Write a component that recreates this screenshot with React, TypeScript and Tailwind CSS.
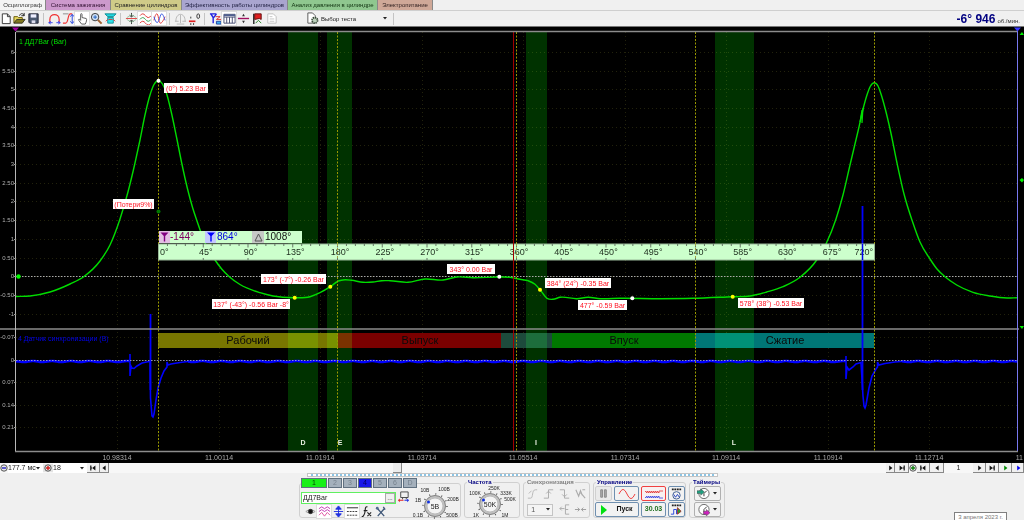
import type { ReactNode } from "react";

type Point = [number, number];

const tabs = [
  { label: "Осциллограф", className: "w-[46px] bg-[#f4f4f4] text-[#333]" },
  { label: "Система зажигания", className: "w-[65px] bg-[#cc99cc] text-[#301030]" },
  { label: "Сравнение цилиндров", className: "w-[71px] bg-[#cfcb88] text-[#222]" },
  { label: "Эффективность работы цилиндров", className: "w-[106px] bg-[#a9a5cf] text-[#222244]" },
  { label: "Анализ давления в цилиндре", className: "w-[90px] bg-[#8fc78f] text-[#113311]" },
  { label: "Электропитание", className: "w-[55px] bg-[#cfa898] text-[#332222]" },
];

const pressure: Point[] = [
  [16, 296.5], [30, 296], [50, 292], [70, 284], [84, 276.5], [100, 261], [110, 245], [120, 219],
  [127.7, 193], [135, 163], [140, 140], [145, 115], [150, 95], [154, 84.5], [158.5, 80.7],
  [162.5, 84], [166.7, 94], [171.7, 114], [176.7, 138], [181.7, 163], [187.3, 188], [192.7, 208],
  [197, 221], [205, 243], [215, 260], [221.7, 269], [229.3, 276.7], [240, 284.5], [260, 292.7],
  [273, 296], [294.7, 297.7], [310, 296.7], [320, 292.7], [330.3, 286.7], [338.3, 281],
  [345, 279.7], [351.7, 280.3], [363, 282.3], [373, 282], [381.7, 280.7], [390, 280.7],
  [408, 282.3], [425, 279], [443, 280], [457, 277], [473, 277.7], [499, 277], [510, 277.3],
  [520, 279.3], [528, 280.7], [535, 284.3], [540, 289.7], [547, 298.3], [553, 299.3],
  [560, 297.3], [577, 298.7], [588, 297.3], [600, 298.7], [620, 298.3], [660, 298.7],
  [693, 298.3], [732.7, 296.7], [750, 296], [766.7, 292], [783, 286.7], [800, 277.3],
  [816.7, 260], [826, 244], [836, 219], [843, 195], [850, 165], [858.3, 130], [863.3, 108],
  [867.3, 94], [870.5, 86], [874.3, 82.7], [878, 86], [881, 94], [885, 108], [890.7, 132],
  [897, 163], [904, 194], [912.3, 221], [920, 242], [930, 259], [937, 269], [945, 276.7],
  [956.7, 285], [973, 292.3], [990, 296], [1007, 298], [1017, 297.7],
];

// Cubic Hermite spline, slopes weighted by the spacing of the samples
function smooth(points: Point[]) {
  const last = points.length - 1;
  const secant = (i: number) => (points[i + 1][1] - points[i][1]) / (points[i + 1][0] - points[i][0]);
  const slope = (i: number) => {
    if (i === 0) return secant(0);
    if (i === last) return secant(last - 1);
    const h0 = points[i][0] - points[i - 1][0];
    const h1 = points[i + 1][0] - points[i][0];
    return (secant(i - 1) * h1 + secant(i) * h0) / (h0 + h1);
  };
  let d = `M${points[0][0]} ${points[0][1]}`;
  for (let i = 0; i < last; i++) {
    const [x0, y0] = points[i];
    const [x1, y1] = points[i + 1];
    const h = (x1 - x0) / 3;
    d += `C${x0 + h} ${y0 + slope(i) * h} ${x1 - h} ${y1 - slope(i + 1) * h} ${x1} ${y1}`;
  }
  return d;
}

function noise(from: number, to: number) {
  let d = `M${from} 361.5`;
  for (let x = from + 1; x <= to; x++) {
    d += `L${x} ${361.5 + Math.sin(x * 12.9) * 0.5}`;
  }
  return d;
}

const leftAxis: [string, number][] = [
  ["6", 52], ["5.50", 71], ["5", 89], ["4.50", 108], ["4", 127], ["3.50", 145], ["3", 164],
  ["2.50", 183], ["2", 201], ["1.50", 220], ["1", 239], ["0.50", 258], ["0", 276],
  ["-0.50", 295], ["-1", 314], ["-0.07", 337], ["0", 360], ["0.07", 382], ["0.14", 405], ["0.21", 427],
];

const timeAxis: [string, number][] = [
  ["10.98314", 117], ["11.00114", 219], ["11.01914", 320], ["11.03714", 422], ["11.05514", 523],
  ["11.07314", 625], ["11.09114", 726], ["11.10914", 828], ["11.12714", 929],
];

const bands = [
  { x: 288, width: 30, name: "D", tx: 303 },
  { x: 327, width: 25, name: "E", tx: 340 },
  { x: 526, width: 21, name: "I", tx: 536 },
  { x: 715, width: 39, name: "L", tx: 734 },
];

const phases = [
  { x: 158, width: 180, fill: "#787600", name: "Рабочий", tx: 248 },
  { x: 338, width: 163, fill: "#7a0000", name: "Выпуск", tx: 420 },
  { x: 501, width: 51, fill: "#1d4a3c", name: "", tx: 527 },
  { x: 552, width: 143, fill: "#007800", name: "Впуск", tx: 624 },
  { x: 695, width: 179, fill: "#007676", name: "Сжатие", tx: 785 },
];

const tags = [
  { x: 164, y: 83, width: 44, text: "(0°) 5.23 Bar" },
  { x: 113, y: 199, width: 41, text: "(Потери9%)" },
  { x: 261, y: 274, width: 65, text: "173° (-7°) -0.26 Bar" },
  { x: 212, y: 299, width: 78, text: "137° (-43°) -0.56 Bar -8°" },
  { x: 447, y: 264, width: 48, text: "343° 0.00 Bar" },
  { x: 545, y: 278, width: 66, text: "384° (24°) -0.35 Bar" },
  { x: 578, y: 300, width: 49, text: "477° -0.59 Bar" },
  { x: 738, y: 298, width: 66, text: "578° (38°) -0.53 Bar" },
];

const dots: [number, number, string][] = [
  [158.5, 80.7, "#fff"], [158.5, 211.5, "#007800"], [294.7, 297.7, "#ff0"], [330.3, 286.7, "#ff0"],
  [499.3, 276.7, "#fff"], [540, 289.7, "#ff0"], [632.3, 298.3, "#fff"], [732.7, 296.7, "#ff0"],
];

const cycleMarks = [158.5, 337.5, 516.5, 695.5, 874.5];
const degrees = Array.from({ length: 15 }, (_, i) => (i + 1) * 45);

const Chart = () => (
  <svg viewBox="0 26 1024 437" className="block w-full bg-black" fontFamily="Liberation Sans, Arial, sans-serif">
    {/* Grid */}
    <g stroke="#22220c" strokeDasharray="1 3">
      {leftAxis.map(([, y]) => (
        <line key={y} x1="16" x2="1017" y1={y + 0.5} y2={y + 0.5} />
      ))}
      {timeAxis.map(([t, x]) => (
        <line key={t} x1={x + 0.5} x2={x + 0.5} y1="32" y2="451" />
      ))}
    </g>

    {/* Stroke bars */}
    {phases.map((p) => (
      <rect key={p.x} x={p.x} y="333" width={p.width} height="15" fill={p.fill} />
    ))}
    {bands.map((b) => (
      <rect key={b.name} x={b.x} y="32" width={b.width} height="419" fill="#003200" className="mix-blend-screen" />
    ))}
    <g fontSize="11" textAnchor="middle" fill="#0a0a0a">
      {phases.map((p) => p.name && <text key={p.x} x={p.tx} y="344">{p.name}</text>)}
    </g>

    {/* Zero line */}
    <path d="M16 276.500H1017" stroke="#aaa" strokeDasharray="1.5 1.5" />

    <path d={smooth(pressure)} fill="none" stroke="#00dc00" strokeWidth="1.4" />
    <path d="M860 122L862 110V123L863 108" fill="none" stroke="#00e000" strokeWidth="1.2" />

    {/* Sync sensor */}
    <g fill="none" stroke="#0000ff">
      <path d={noise(16, 129)} strokeWidth="2.6" />
      <path d={noise(188, 845)} strokeWidth="2.6" />
      <path d={noise(902, 1017)} strokeWidth="2.6" />
      <path
        d="M129 361L130 362V354V376L131 366L132 368L134 368.500L137 366L142 363L149 361.500L150 362L150.500 398L151.500 410L152 416L153 417L154 414L156 400L158 388L161 378L164 371L167 367V362L168 365L171 364L180 362.500L188 361.500"
        strokeWidth="1.6"
      />
      <path d="M150.500 314V390" strokeWidth="1.800" />
      <path
        d="M845 361L846 362V356V379L847 367L849 370L853 367L856 364L861 362.500L863 396L864 406L865 408L866 405L869 388L872 376L876 369L877.500 367V362L879 365L885 363.500L895 362L902 361.500"
        strokeWidth="1.6"
      />
      <path d="M862.500 206V390" strokeWidth="1.800" />
    </g>
    <path d="M16 360.500H1017" stroke="#b0b0d0" strokeOpacity="0.8" strokeDasharray="1.5 1.5" />

    {/* Cycle marks */}
    {cycleMarks.map((x) => (
      <line key={x} x1={x} x2={x} y1="32" y2="451" stroke="#989800" strokeDasharray="2 1.5" />
    ))}

    {/* Degree ruler */}
    <rect x="158.500" y="244" width="716" height="16" fill="#ccffcc" stroke="#99b899" />
    <g stroke="#667766">
      {Array.from({ length: 79 }, (_, i) => {
        const x = 158.5 + (i + 1) * 8.95;
        const major = (i + 1) % 5 === 0;
        return (
          <g key={i}>
            <line x1={x} x2={x} y1="244" y2={major ? 247.5 : 246} />
            {major && <line x1={x} x2={x} y1="258" y2="260" />}
          </g>
        );
      })}
    </g>
    <g fontSize="9" fill="#223322">
      <text x="160" y="255">0°</text>
      {degrees.map((d) => (
        <text key={d} x={161 + d * 0.9943} y="255" textAnchor="middle">{d}°</text>
      ))}
      <text x="873" y="255" textAnchor="end">720°</text>
    </g>
    <line x1="862.500" x2="862.500" y1="244" y2="260" stroke="#0000f0" strokeWidth="1.5" />
    {cycleMarks.slice(1, 4).map((x) => (
      <line key={x} x1={x} x2={x} y1="244" y2="260" stroke="#a0a040" strokeDasharray="2 2" />
    ))}
    <line x1="513.500" x2="513.500" y1="32" y2="451" stroke="#a00000" />

    {/* Cursor read-out */}
    <rect x="159" y="231" width="143" height="12" fill="#ccffcc" />
    <rect x="159" y="231" width="11" height="12" fill="#e2bfe2" />
    <rect x="205" y="231" width="11" height="12" fill="#c4c8ff" />
    <rect x="252" y="231" width="12" height="12" fill="#c6c8c6" />
    <path d="M160.500 232.500H168.500L165.200 236V241.500H163.800V236Z" fill="#800080" />
    <path d="M207 232.500H215L211.700 236V241.500H210.300V236Z" fill="#0000ff" />
    <path d="M258.500 234L262 241H255Z" fill="none" stroke="#555" />
    <g fontSize="10">
      <text x="170" y="240" fill="#800060">-144°</text>
      <text x="217" y="240" fill="#0000e0">864°</text>
      <text x="265" y="240" fill="#111">1008°</text>
    </g>

    {dots.map(([x, y, fill]) => (
      <circle key={`${x}-${y}`} cx={x} cy={y} r="2" fill={fill} />
    ))}
    <circle cx="18.500" cy="276.500" r="2.200" fill="#00ff00" />

    {/* Value tags */}
    {tags.map((t) => (
      <g key={t.text}>
        <rect x={t.x} y={t.y} width={t.width} height="10" fill="#fff" />
        <text x={t.x + t.width / 2} y={t.y + 8} fontSize="7" textAnchor="middle" fill="#ff1020">{t.text}</text>
      </g>
    ))}

    {/* Frame */}
    <path d="M0 26.500H1024" stroke="#777" />
    <path d="M16 31.500H1018M0 329H1019M15 451.500H1018" stroke="#8c8c8c" strokeWidth="1.300" />
    <path d="M15.500 32V451" stroke="#b8b8b8" />
    <path d="M1017.500 28V451" stroke="#7878f0" />
    <path d="M12 27.500H19L15.500 31.500Z" fill="#a000a0" />
    <path d="M1014 27.500H1021L1017.500 31.500Z" fill="#3838ff" />
    <path d="M1019.500 35L1022 32L1024 35ZM1019.500 326H1024L1022 329ZM1019.500 180L1022 178L1024 180L1022 182.500Z" fill="#00f000" />

    <g fontSize="6" fill="#b0b0b0" textAnchor="end">
      {leftAxis.map(([label, y]) => (
        <g key={y}>
          <text x="14" y={y + 2}>{label}</text>
          <line x1="14" x2="16" y1={y + 0.5} y2={y + 0.5} stroke="#999" />
        </g>
      ))}
    </g>
    <g fontSize="7" fill="#aaa" textAnchor="middle">
      {timeAxis.map(([label, x]) => (
        <text key={label} x={x} y="460">{label}</text>
      ))}
      <text x="1023" y="460" textAnchor="end">11</text>
    </g>
    <g fontSize="7">
      <text x="19" y="44" fill="#00e000">1 ДД7Bar (Bar)</text>
      <text x="18" y="341" fill="#0000e8">4 Датчик синхронизации (В)</text>
    </g>
    <g fontSize="7" fontWeight="bold" fill="#e8f0e0" textAnchor="middle">
      {bands.map((b) => (
        <text key={b.name} x={b.tx} y="445">{b.name}</text>
      ))}
    </g>
  </svg>
);

const Icon = ({ children }: { children: ReactNode }) => (
  <svg viewBox="0 0 14 14" className="h-[13px] w-[13px] shrink-0" fill="none" stroke="#333">
    {children}
  </svg>
);

const Tool = ({ label, pressed, children }: { label: string; pressed?: boolean; children: ReactNode }) => (
  <button
    aria-label={label}
    className={
      pressed
        ? "flex h-[13px] w-[14px] items-center justify-center bg-white outline outline-[#ddd]"
        : "flex h-[13px] w-[14px] items-center justify-center"
    }
  >
    <Icon>{children}</Icon>
  </button>
);

const Separator = () => <div className="mx-[3px] h-[12px] w-px bg-[#c4c4c4]" />;

const Caret = () => (
  <svg viewBox="0 0 4 3" className="pointer-events-none absolute right-[3px] h-[3px] w-[4px]">
    <path d="M0 0H4L2 2.500Z" fill="#222" />
  </svg>
);

const Toolbar = () => (
  <div className="flex h-[15px] items-center bg-[#f0f0f0]">
    <button aria-label="Новый" className="flex w-[12px] justify-center">
      <Icon><path d="M2.500 2H8L11 5V12.500H2.500ZM8 2V5H11" fill="#fff" /></Icon>
    </button>
    <Tool label="Открыть">
      <path d="M1 12V5H5L6 6H10V8" fill="#e8d860" stroke="#665500" />
      <path d="M1 12L4 8H13L10 12Z" fill="#807820" stroke="#332" />
      <path d="M7 4C8 1 11 1 12 4M12 1V4H9" stroke="#222" />
    </Tool>
    <Tool label="Сохранить">
      <path d="M2 2H12V12H3L2 11Z" fill="#4a5870" stroke="#223" />
      <path d="M4 2.500H10V6H4Z" fill="#eef" stroke="none" />
      <path d="M5 9H9V12H5Z" fill="#dde" stroke="none" />
    </Tool>
    <Separator />
    <Tool label="Цикл">
      <path d="M2 11V8C2 1 12 1 12 8V11" stroke="#f03030" strokeWidth="1.300" />
      <path d="M0.500 11.500H5M9 11.500H13.500M3 10L1 11.500L3 13M11 10L13 11.500L11 13" stroke="#3040f0" />
    </Tool>
    <Tool label="Фронт">
      <path d="M1 12H4C7 12 6 2 9 2H11" stroke="#f03030" strokeWidth="1.300" />
      <path d="M11 3V12M9 5L11 2.500L13 5M9 10L11 12.500L13 10" stroke="#2040e0" />
      <path d="M1 2H7" stroke="#888" />
    </Tool>
    <Tool label="Рука" pressed>
      <path d="M5 9V2.500C5 1.500 6.500 1.500 6.500 2.500V6L11 7C12 8 11 11 10 13H6L3 9C2 8 3.500 7 5 9Z" fill="#fff" stroke="#555" />
    </Tool>
    <Tool label="Масштаб">
      <circle cx="5.500" cy="5.500" r="4" fill="#cfe0f4" stroke="#333" />
      <path d="M3.500 5.500H7.500M5.500 3.500V7.500" stroke="#2060c0" />
      <path d="M8.500 8.500L12.500 12.500" stroke="#a06030" strokeWidth="2.200" />
    </Tool>
    <Tool label="Экран">
      <path d="M1 2H13L10 5H4Z" fill="#20d8e0" stroke="#108890" />
      <path d="M4 6H10V12H4Z" fill="#30e0e8" stroke="#109098" />
      <path d="M5 8H9M2 10L4 8M12 10L10 8" stroke="#e03030" />
    </Tool>
    <Separator />
    <Tool label="Центр">
      <path d="M1 7H13" stroke="#e04040" />
      <path d="M7 1V5M7 9V13M5 3.500L7 5.500L9 3.500M5 10.500L7 8.500L9 10.500" stroke="#333" />
      <path d="M2 6L7 3L12 6M2 8L7 11L12 8" stroke="#70b080" strokeWidth="0.700" />
    </Tool>
    <Tool label="Раздельно" pressed>
      <path d="M1 4Q4 0 7 4T13 4" stroke="#e03030" />
      <path d="M1 8Q4 4 7 8T13 8" stroke="#30a050" />
      <path d="M1 12Q4 8 7 12T13 12" stroke="#e03030" />
    </Tool>
    <Tool label="Вместе" pressed>
      <path d="M1 9C3 0 5 0 6 7S9 14 13 5" stroke="#e03030" />
      <path d="M1 5C3 12 5 14 7 7S10 0 13 9" stroke="#3050e0" />
    </Tool>
    <Separator />
    <Tool label="Весы">
      <path d="M2 10C2 0 12 0 12 10M7 3V12M1 10H5M9 10H13M3 13H11" stroke="#b4b4b4" />
    </Tool>
    <Tool label="Ноль">
      <path d="M1 10H8" stroke="#e02020" strokeWidth="1.800" />
      <path d="M3 7V5M3 12V14M6 12V14" />
      <ellipse cx="11" cy="4.500" rx="1.500" ry="2.500" />
    </Tool>
    <Separator />
    <Tool label="Анализ">
      <path d="M1 2H8M2 2L4.500 6V12M8 2L5 6" stroke="#2020e0" strokeWidth="1.500" />
      <path d="M7 5H12L8 8H13" stroke="#e03030" />
      <path d="M8 10H13V13H8Z" fill="#40b0f0" stroke="#2040a0" />
    </Tool>
    <Tool label="Таблица" pressed>
      <path d="M1 2.500H13V12H1ZM1 5.500H13M4 5.500V12M7 5.500V12M10 5.500V12" stroke="#444c70" />
      <path d="M1 3.500H13" stroke="#506090" strokeWidth="2" />
    </Tool>
    <Tool label="Разделить">
      <path d="M1 7H13" stroke="#a01060" strokeWidth="1.500" />
      <path d="M7 2L8.500 4.500H5.500ZM7 12L8.500 9.500H5.500Z" fill="#333" stroke="none" />
    </Tool>
    <Tool label="Флаг">
      <path d="M3 2V13" stroke="#222" strokeWidth="1.500" />
      <path d="M4 2H11V8L9 7L4 8Z" fill="#e02020" stroke="#601010" />
      <path d="M5 12L8 9L11 12" stroke="#208020" />
    </Tool>
    <Tool label="Отчёт">
      <path d="M3 2H9L12 5V12H3Z" fill="#fff" stroke="#bbb" />
      <path d="M5 5H8M5 7.500H10M5 10H10" stroke="#c4c4c4" />
    </Tool>
    <div className="ml-[28px] flex items-center gap-[2px]">
      <Icon>
        <path d="M2 1H7L10 4V12H2Z" fill="#fff" stroke="#555" />
        <circle cx="9.500" cy="9" r="3" fill="#bcd0bc" stroke="#3a4a3a" strokeDasharray="1.500 0.800" strokeWidth="1.800" />
      </Icon>
      <label className="relative flex items-center">
        <select aria-label="Выбор теста" className="h-[12px] w-[69px] appearance-none bg-transparent p-0 text-[6px] leading-[12px] text-[#222]">
          <option>Выбор теста</option>
        </select>
        <Caret />
      </label>
    </div>
    <Separator />
    <div className="ml-auto flex items-baseline gap-[2px] pr-[4px] text-[#000080]">
      <span className="text-[12px] leading-[14px] font-bold">-6° 946</span>
      <span className="text-[6px] text-[#333]">об./мин.</span>
    </div>
  </div>
);

const shapes = {
  next: "M4 2L8 5L4 8Z",
  last: "M2 2L6 5L2 8ZM7 2H8.500V8H7ZM6 4.500H8V5.500H6Z",
  first: "M8 2L4 5L8 8ZM1.500 2H3V8H1.500ZM3 4.500H5V5.500H3Z",
  prev: "M7 2L3 5L7 8Z",
};

type NavButtonProps = { shape: keyof typeof shapes; label: string; color?: string; className?: string };

const NavButton = ({ shape, label, color = "#111", className = "w-[13px]" }: NavButtonProps) => (
  <button
    aria-label={label}
    className={`flex h-[10px] items-center justify-center border-r border-b border-[#888] bg-[#f0f0f0] ${className}`}
  >
    <svg viewBox="0 0 10 10" className="h-[8px] w-[8px]"><path d={shapes[shape]} fill={color} /></svg>
  </button>
);

const RoundMark = ({ color, plus }: { color: string; plus?: boolean }) => (
  <svg viewBox="0 0 8 8" className="h-[8px] w-[8px] shrink-0" fill="none">
    <circle cx="4" cy="4" r="3.200" fill="#e8e8e8" stroke="#555" />
    <path d={plus ? "M2 4H6M4 2V6" : "M2 4H6"} stroke={color} strokeWidth="1.400" />
  </svg>
);

const ScrollRow = () => (
  <div className="flex h-[10px] items-center bg-[#f7f7f7] text-[7px] leading-[10px] text-[#222]">
    <button aria-label="Сжать" className="w-[8px]"><RoundMark color="#2020c0" /></button>
    <label className="relative flex items-center">
      <select aria-label="Развёртка" className="h-[10px] w-[35px] appearance-none bg-white p-0">
        <option>177.7 мс</option>
      </select>
      <Caret />
    </label>
    <button aria-label="Растянуть" className="flex w-[10px] justify-center bg-[#e4e4e4]"><RoundMark color="#d02020" plus /></button>
    <label className="relative flex items-center">
      <select aria-label="Масштаб по времени" className="h-[10px] w-[34px] appearance-none bg-white p-0">
        <option>18</option>
      </select>
      <Caret />
    </label>
    <NavButton shape="first" label="В начало" />
    <NavButton shape="prev" label="Назад" className="w-[9px]" />
    <div className="flex flex-1">
      <div className="basis-[36.5%]" />
      <button aria-label="Полоса прокрутки" className="h-[10px] w-[9px] border-r border-b border-[#888] bg-[#ececec]" />
    </div>
    <NavButton shape="next" label="Вперёд" className="w-[9px]" />
    <NavButton shape="last" label="В конец" className="w-[14px]" />
    <RoundMark color="#108010" plus />
    <NavButton shape="first" label="Первый кадр" />
    <NavButton shape="prev" label="Предыдущий кадр" className="w-[14px]" />
    <span className="w-[29px] text-center">1</span>
    <NavButton shape="next" label="Следующий кадр" />
    <NavButton shape="last" label="Последний кадр" />
    <NavButton shape="next" label="Воспроизвести" color="#008800" />
    <NavButton shape="next" label="Запись" color="#0000f0" className="w-[12px]" />
  </div>
);

const channels = [
  { name: "1", className: "w-[26px] bg-[#18f018] text-[#063806]" },
  { name: "2", className: "w-[14px] bg-[#a4b0bc] text-[#76828e]" },
  { name: "3", className: "w-[14px] bg-[#a4b0bc] text-[#76828e]" },
  { name: "4", className: "w-[14px] bg-[#1818e8] text-[#000060]" },
  { name: "5", className: "w-[14px] bg-[#a4b0bc] text-[#76828e]" },
  { name: "6", className: "w-[14px] bg-[#a4b0bc] text-[#76828e]" },
  { name: "D", className: "w-[14px] bg-[#a4b0bc] text-[#76828e]" },
];

type DialProps = { name: string; value: string; marks: [string, number, number][] };

const Dial = ({ name, value, marks }: DialProps) => (
  <svg viewBox="0 0 52 31" role="img" aria-label={name} className="h-[31px] w-[52px] shrink-0 overflow-visible" fontFamily="Liberation Sans, Arial, sans-serif">
    <circle cx="25" cy="18" r="12" fill="none" stroke="#555" strokeWidth="1.500" strokeDasharray="1 5.280" />
    <circle cx="25" cy="18" r="10.500" fill="#c0c0c0" stroke="#808080" />
    <circle cx="25" cy="18" r="8" fill="#f4f4f4" stroke="#bbb" />
    <circle cx="18.500" cy="14" r="1.500" fill="#1030e0" />
    <text x="25" y="21" fontSize="7" textAnchor="middle" fill="#222">{value}</text>
    <g fontSize="5" textAnchor="middle" fill="#222">
      {marks.map(([label, x, y]) => (
        <text key={label} x={x} y={y}>{label}</text>
      ))}
    </g>
  </svg>
);

const Group = ({ title, muted, className, children }: { title: string; muted?: boolean; className: string; children: ReactNode }) => (
  <fieldset className={`h-[40px] min-w-0 rounded-[3px] border border-[#d0d0d0] ${className}`}>
    <legend className={`ml-[2px] px-px text-[6px] leading-[8px] font-bold ${muted ? "text-[#808080]" : "text-[#000080]"}`}>
      {title}
    </legend>
    {children}
  </fieldset>
);

const control = "flex h-[15px] items-center justify-center rounded-[2px] border border-[#6f8faf] bg-[#f2f2f2]";

const ControlPanel = () => (
  <div className="relative flex-1 overflow-hidden bg-[#f0f0f0]">
    <div className="mx-auto h-[4px] w-[411px] border border-[#c4c4c4] bg-white px-[3px]">
      <div className="border-t-2 border-dotted border-[#8cc4e4]" />
    </div>
    <div className="mt-px flex justify-center gap-[3px]">
      {/* Channels */}
      <fieldset className="flex h-[40px] w-[162px] min-w-0 rounded-[3px] border border-[#d0d0d0]">
        <legend className="ml-px flex gap-px">
          {channels.map((c) => (
            <button key={c.name} className={`h-[10px] border border-[#607080] text-[7px] leading-[8px] ${c.className}`}>
              {c.name}
            </button>
          ))}
        </legend>
        <div className="ml-px flex w-[109px] shrink-0 flex-col gap-px pt-[3px]">
          <div className="flex items-center gap-px">
            <div className="flex h-[12px] w-[95px] border border-[#60f060] bg-white">
              <input aria-label="Датчик" defaultValue="ДД7Bar" className="w-[83px] bg-white pl-px text-[7px] leading-[10px] text-[#222]" />
              <button aria-label="Выбрать датчик" className="h-[10px] w-[10px] border border-[#aaa] bg-[#f0f0f0] text-[6px] leading-[4px]">...</button>
            </div>
            <Icon>
              <path d="M4 1H12V7H4ZM6 7V9M10 7V9" stroke="#444" />
              <path d="M1 10L3 8V12ZM3 9.500H7V10.500H3Z" fill="#e02020" stroke="none" />
              <path d="M13 10L11 8V12ZM8 9.500H11V10.500H8Z" fill="#2030e0" stroke="none" />
            </Icon>
          </div>
          <div className="flex pl-[2px]">
            <Tool label="Показать">
              <path d="M2 7Q7 3 12 7Q7 11 2 7Z" stroke="#999" />
              <circle cx="7" cy="7" r="2.300" fill="#111" />
            </Tool>
            <Tool label="Фильтр" pressed>
              <path d="M1 4L4 2L7 4L10 2L13 4M1 7L4 5L7 7L10 5L13 7" stroke="#c030b0" />
              <path d="M1 11L4 8L7 12L10 8L13 11" stroke="#e050a0" />
            </Tool>
            <Tool label="Инверсия">
              <path d="M7 1L10 4.500H4ZM7 13L10 9.500H4Z" fill="#2030e0" stroke="#2030e0" />
              <path d="M7 4V10M2 7H12" stroke="#2030e0" />
            </Tool>
            <Tool label="Тип линии" pressed>
              <path d="M1 3H13" stroke="#222" />
              <path d="M1 7H13M1 11H13" strokeDasharray="2 1" stroke="#333" />
            </Tool>
            <Tool label="Функция">
              <path d="M8 2C5 1 6 6 5 9S3 13 2 12M4 6H8M8 8L12 12M12 8L8 12" stroke="#222" strokeWidth="1.200" />
            </Tool>
            <Tool label="Настройка">
              <path d="M3 3L11 12M4 12L11 4M10 2L12 5" stroke="#405878" strokeWidth="1.400" />
              <circle cx="3.500" cy="3.500" r="1.500" fill="#506890" stroke="none" />
            </Tool>
          </div>
        </div>
        <Dial
          name="Чувствительность"
          value="5В"
          marks={[["0.1В", 8, 29], ["1В", 8, 14], ["10В", 15, 4], ["100В", 34, 3], ["200В", 43, 13], ["500В", 42, 29]]}
        />
      </fieldset>

      <Group title="Частота" className="w-[56px]">
        <Dial
          name="Частота"
          value="50K"
          marks={[["1K", 11, 31], ["100K", 10, 9], ["250K", 29, 4], ["333K", 41, 9], ["500K", 45, 15], ["1M", 40, 31]]}
        />
      </Group>

      <Group title="Синхронизация" muted className="w-[67px]">
        <div className="grid grid-cols-4 items-center justify-items-center gap-y-[3px] pt-px text-[#999]">
          <Icon><path d="M2 12H5C8 12 6 3 10 3H12M3 7L6 4" stroke="#b4b4b4" /></Icon>
          <Icon><path d="M2 12H7V3H12M4.500 7L7 4.500L9.500 7" stroke="#aaa" /></Icon>
          <Icon><path d="M2 3H7V12H12M4.500 8L7 10.500L9.500 8" stroke="#aaa" /></Icon>
          <Icon><path d="M2 3L5 10L7 4L9 9M7 6L12 12M9 3H12" stroke="#aaa" strokeWidth="1.200" /></Icon>
          <label className="relative col-span-2 flex items-center">
            <select aria-label="Канал синхронизации" className="h-[12px] w-[26px] appearance-none border border-[#c4c4c4] bg-[#f4f4f4] pl-[3px] text-[7px] leading-[10px] text-[#555]">
              <option>1</option>
            </select>
            <Caret />
          </label>
          <Icon><path d="M2 6H7M4 4L2 6L4 8M12 2H8V12H12M8 7H11" stroke="#aaa" /></Icon>
          <Icon><path d="M1 7H6M8 7H13M4 5L6 7L4 9M10 5L8 7L10 9" stroke="#999" /></Icon>
        </div>
      </Group>

      <Group title="Управление" className="w-[93px]">
        <div className="grid grid-cols-[17px_25px_25px_17px] gap-x-[2px] gap-y-px pl-px">
          <button aria-label="Пауза" className="flex h-[15px] items-center justify-center rounded-[2px] border border-[#d0d0d0] bg-[#eaeaea]">
            <Icon><path d="M4 3H6V11H4ZM8 3H10V11H8Z" fill="#aaa" stroke="#888" /></Icon>
          </button>
          <button aria-label="Синус" className={control}>
            <svg viewBox="0 0 20 12" className="h-[12px] w-[20px]" fill="none">
              <path d="M2 6C5 0 7 0 10 6S15 12 18 6" stroke="#f04040" />
            </svg>
          </button>
          <button aria-label="Поток" className="flex h-[15px] items-center justify-center rounded-[2px] border border-[#f04040] bg-[#f8f0f0]">
            <svg viewBox="0 0 20 12" className="h-[12px] w-[20px]" fill="none">
              <path d="M1 3L3 5V3L5 5V3L7 5V3L9 5V3L11 5V3L13 5V3L15 5V3H19" stroke="#e03030" strokeWidth="0.800" />
              <path d="M1 10L3 8V10L5 8V10L7 8V10L9 8V10L11 8V10L13 8V10L15 8V10H19" stroke="#3040e0" strokeWidth="0.800" />
            </svg>
          </button>
          <button aria-label="Авто масштаб" className={control}>
            <Icon>
              <path d="M2 2.500H12" stroke="#222" strokeWidth="2" strokeDasharray="2 0.700" />
              <circle cx="7" cy="9" r="4" stroke="#3a5a90" />
              <path d="M4 8L6 11L8 8L10 11" stroke="#2040c0" />
            </Icon>
          </button>
          <button className={`${control} col-span-2 gap-[9px] text-[7px] font-bold text-[#111]`}>
            <svg viewBox="0 0 6 10" className="h-[10px] w-[6px]"><path d="M0 0L6 5L0 10Z" fill="#00e010" /></svg>
            Пуск
          </button>
          <button className={`${control} text-[7px] font-bold text-[#207020]`}>30.03</button>
          <button aria-label="Авто запуск" className={control}>
            <Icon>
              <path d="M2 2.500H12" stroke="#222" strokeWidth="2" strokeDasharray="2 0.700" />
              <path d="M1 12H4V7H7V12" stroke="#2040e0" />
              <path d="M8 5L12 9L8 12Z" fill="#20a030" stroke="#a03030" />
            </Icon>
          </button>
        </div>
      </Group>

      <Group title="Таймеры" className="w-[36px]">
        <div className="flex flex-col items-center gap-px">
          {["#20a080", "#d020c0"].map((color, i) => (
            <button key={color} aria-label={i ? "Таймер остановки" : "Таймер запуска"} className="relative flex h-[15px] w-[27px] items-center rounded-[2px] border border-[#b0b0b0] bg-[#f2f2f2] pl-[2px]">
              <Icon>
                <circle cx="7.500" cy="7" r="5.500" fill="#fff" stroke="#666" />
                <path d="M7.500 7L10.500 4M7.500 7V10" stroke="#333" />
                <path d={i ? "M7 9H10V7L14 10.500L10 14V12H7Z" : "M0 4H4V2L8 5.500L4 9V7H0Z"} fill={color} stroke="#444" strokeWidth="0.500" />
              </Icon>
              <Caret />
            </button>
          ))}
        </div>
      </Group>
    </div>

    {/* Clock tooltip */}
    <div className="absolute right-[17px] -bottom-[2px] w-[53px] border border-[#808080] bg-white text-center text-[6px] leading-[8px] text-[#777]">
      3 апреля 2023 г.
    </div>
  </div>
);

const App = () => {
  return (
    <div className="flex min-h-screen flex-col overflow-hidden bg-[#f0f0f0] font-['Liberation_Sans',Arial,sans-serif]">
      <div className="flex h-[11px] border-b border-[#cfcfcf] bg-[#f0f0f0]">
        {tabs.map((tab) => (
          <button
            key={tab.label}
            className={`border-r border-[#888] text-[6px] leading-[10px] whitespace-nowrap ${tab.className}`}
          >
            {tab.label}
          </button>
        ))}
      </div>
      <Toolbar />
      <Chart />
      <ScrollRow />
      <ControlPanel />
    </div>
  );
};

export default App;
